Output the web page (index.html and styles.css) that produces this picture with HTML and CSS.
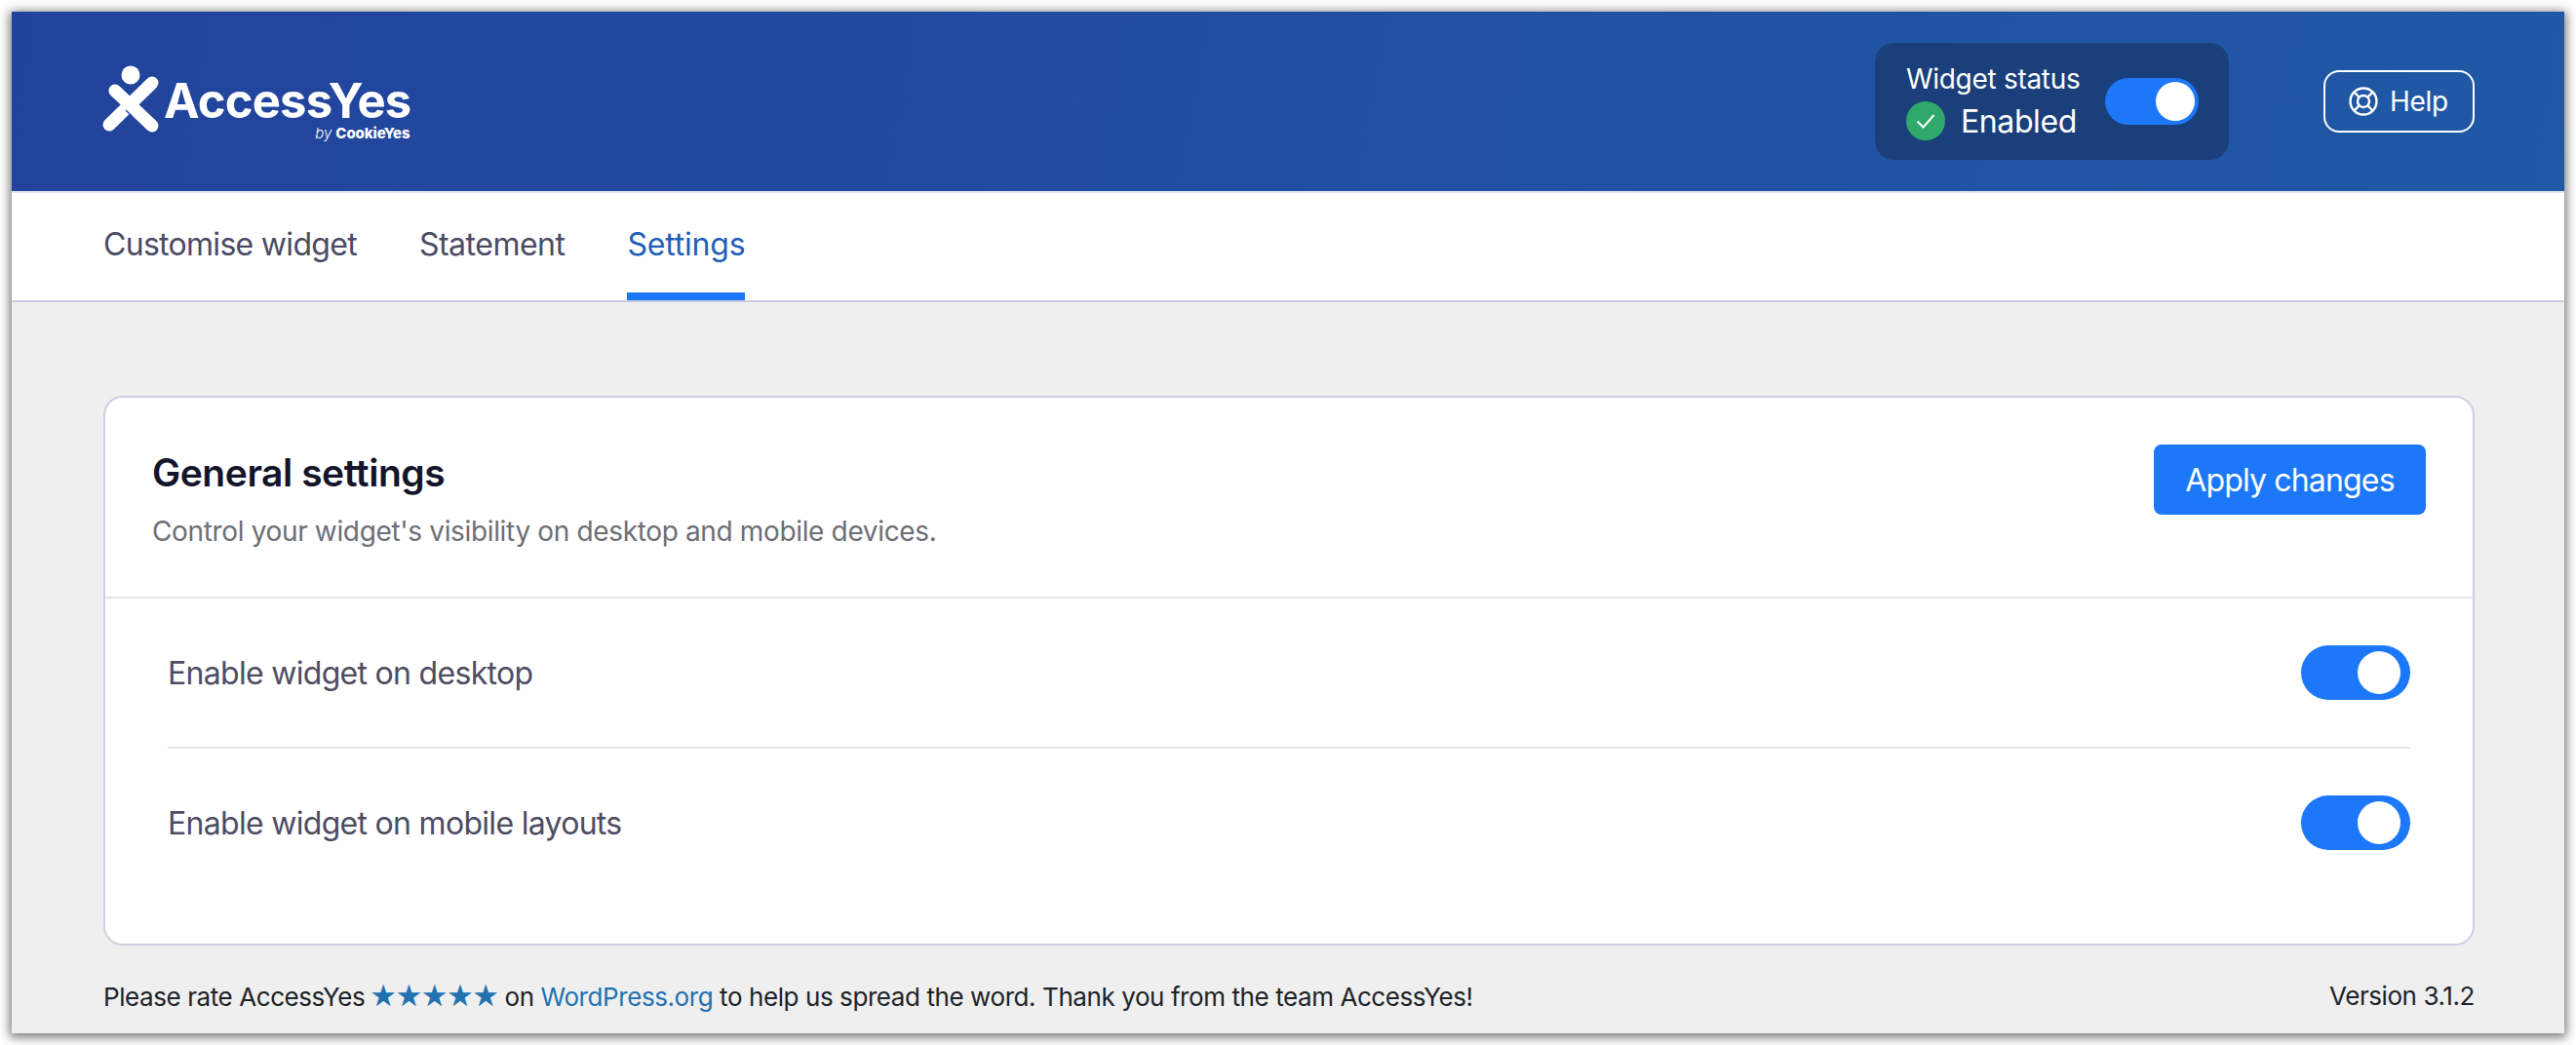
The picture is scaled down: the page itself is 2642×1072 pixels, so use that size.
FILE: index.html
```html
<!DOCTYPE html>
<html lang="en">
<head>
<meta charset="utf-8">
<title>AccessYes</title>
<link rel="stylesheet" href="styles.css">
</head>
<body>
<div class="window">
  <header class="topbar">
    <div class="logo">
      <svg class="logo-mark" width="60" height="81" viewBox="0 0 60 81">
        <circle cx="30" cy="13" r="9.5" fill="#fff"/>
        <path d="M14 29 L52 65" stroke="#fff" stroke-width="13" stroke-linecap="round"/>
        <path d="M52 21 L8 64" stroke="#fff" stroke-width="13" stroke-linecap="round"/>
        <path d="M25 49 L32 56" stroke="#22459d" stroke-width="1.200"/>
      </svg>
      <div class="logo-words">
        <span class="logo-name">AccessYes</span>
        <span class="logo-by"><i>by</i> <b>CookieYes</b></span>
      </div>
    </div>
    <div class="top-actions">
      <div class="status">
        <div class="status-info">
          <div class="status-label">Widget status</div>
          <div class="status-value">
            <svg width="40" height="40" viewBox="0 0 40 40"><circle cx="20" cy="20" r="20" fill="#2fa86c"/><path d="M11.500 20.500 L17.500 26.500 L28.500 14" fill="none" stroke="#fff" stroke-width="2"/></svg>
            <span>Enabled</span>
          </div>
        </div>
        <div class="toggle toggle-small"><span class="knob"></span></div>
      </div>
      <button class="help">
        <svg width="30" height="30" viewBox="0 0 30 30" fill="none" stroke="#fff" stroke-width="2.400"><circle cx="15" cy="15" r="13.500"/><circle cx="15" cy="15" r="6"/><path d="M5.500 5.500 L10.800 10.800 M24.500 5.500 L19.200 10.800 M5.500 24.500 L10.800 19.200 M24.500 24.500 L19.200 19.200"/></svg>
        <span>Help</span>
      </button>
    </div>
  </header>
  <nav class="tabs">
    <a class="tab">Customise widget</a>
    <a class="tab tab-statement">Statement</a>
    <a class="tab tab-active">Settings</a>
  </nav>
  <main class="content">
    <section class="card">
      <div class="card-head">
        <div>
          <h1 class="card-title">General settings</h1>
          <p class="card-desc">Control your widget's visibility on desktop and mobile devices.</p>
        </div>
        <button class="apply">Apply changes</button>
      </div>
      <div class="rows">
        <div class="row">
          <span>Enable widget on desktop</span>
          <div class="toggle"><span class="knob"></span></div>
        </div>
        <div class="row">
          <span>Enable widget on mobile layouts</span>
          <div class="toggle"><span class="knob"></span></div>
        </div>
      </div>
    </section>
    <footer class="foot">
      <div>Please rate AccessYes <span class="stars">★★★★★</span> on <a class="link">WordPress.org</a> to help us spread the word. Thank you from the team AccessYes!</div>
      <div>Version 3.1.2</div>
    </footer>
  </main>
</div>
</body>
</html>
```
FILE: styles.css
```css
* { box-sizing: border-box; }
html, body { margin: 0; height: 100%; background: #fff; }
body { padding: 12px; font-family: Inter, "Liberation Sans", sans-serif; overflow: hidden; }
.window { width: 2618px; height: 1048px; display: flex; flex-direction: column; background: #efefef; box-shadow: 0 2px 10px 2px rgba(0,0,0,.55); }
.topbar { height: 186px; flex: none; display: flex; align-items: center; justify-content: space-between; padding: 0 92px; background: linear-gradient(100deg, #22439c 0%, #2059a6 100%); border-bottom: 2px solid #e3e6f0; color: #fff; background-clip: padding-box; }
.logo { display: flex; align-items: flex-start; gap: 4px; }
.logo-mark { display: block; }
.logo-words { display: flex; flex-direction: column; align-items: flex-end; }
.logo-name { font-size: 49px; font-weight: 700; line-height: 44px; letter-spacing: -.8px; margin-top: 18px; }
.logo-by { font-size: 15px; line-height: 16px; margin-top: 3px; margin-right: 1px; letter-spacing: -.1px; }
.logo-by i { font-weight: 300; }
.logo-by b { font-weight: 800; }
.top-actions { display: flex; align-items: center; gap: 97px; }
.status { width: 363px; height: 120px; display: flex; align-items: center; gap: 26px; padding: 0 32px; border-radius: 20px; background: #1a3f7a; }
.status-label { font-size: 28px; line-height: 36px; font-weight: 400; white-space: nowrap; letter-spacing: -.3px; position: relative; top: -1px; }
.status-value { display: flex; align-items: center; gap: 16px; font-size: 32px; line-height: 40px; margin-top: 4px; font-weight: 400; letter-spacing: -.4px; }
.status-value svg { display: block; }
.status-value span { position: relative; top: 1px; }
.toggle { width: 112px; height: 56px; flex: none; display: flex; justify-content: flex-end; align-items: center; padding-right: 10px; border-radius: 28px; background: #1c78f8; }
.knob { width: 44px; height: 44px; border-radius: 50%; background: #fff; }
.toggle-small { width: 96px; height: 48px; padding-right: 4px; border-radius: 24px; }
.toggle-small .knob { width: 40px; height: 40px; }
.help { width: 155px; height: 64px; display: flex; align-items: center; gap: 12px; padding: 0 0 0 24px; border: 2px solid #fff; border-radius: 16px; background: transparent; color: #fff; font: 400 28px Inter, sans-serif; letter-spacing: -.3px; }
.help svg { display: block; flex: none; }
.tabs { height: 112px; flex: none; display: flex; gap: 64px; padding: 0 94px; background: #fff; border-bottom: 2px solid #c9cce0; }
.tab { display: flex; align-items: center; height: 110px; padding-top: 3px; font-size: 32px; letter-spacing: -.7px; color: #4b4b63; border-bottom: 8px solid transparent; }
.tab-statement { letter-spacing: -.5px; }
.tab-active { color: #1f5fb8; border-bottom-color: #1c78f8; letter-spacing: -.2px; }
.content { flex: 1; display: flex; flex-direction: column; padding: 96px 92px 0 94px; }
.card { height: 564px; flex: none; background: #fff; border: 2px solid #cfd0e4; border-radius: 20px; }
.card-head { height: 206px; display: flex; justify-content: space-between; align-items: flex-start; padding: 48px 48px 0; border-bottom: 2px solid #e6e6ea; }
.card-title { margin: 7px 0 0; font-size: 39px; line-height: 44px; font-weight: 600; color: #14142b; letter-spacing: -.45px; }
.card-desc { margin: 20px 0 0; font-size: 28px; line-height: 36px; letter-spacing: -.35px; color: #6e6e76; }
.apply { width: 279px; height: 72px; border: 0; border-radius: 8px; background: #1c78f8; color: #fff; font: 400 32px Inter, sans-serif; letter-spacing: -.85px; }
.rows { padding: 0 64px; }
.row { height: 152px; display: flex; align-items: center; justify-content: space-between; font-size: 32px; letter-spacing: -.7px; color: #4e4c62; }
.row + .row { height: 154px; border-top: 2px solid #e6e6ea; }
.foot { flex: 1; display: flex; justify-content: space-between; align-items: center; font-size: 26px; letter-spacing: -.42px; color: #1d2327; padding-top: 13px; }
.link { color: #2271b1; }
.stars { color: #2271b1; font-family: "DejaVu Sans", sans-serif; font-size: 31px; letter-spacing: -1.5px; margin-left: -2px; line-height: 30px; }
```
